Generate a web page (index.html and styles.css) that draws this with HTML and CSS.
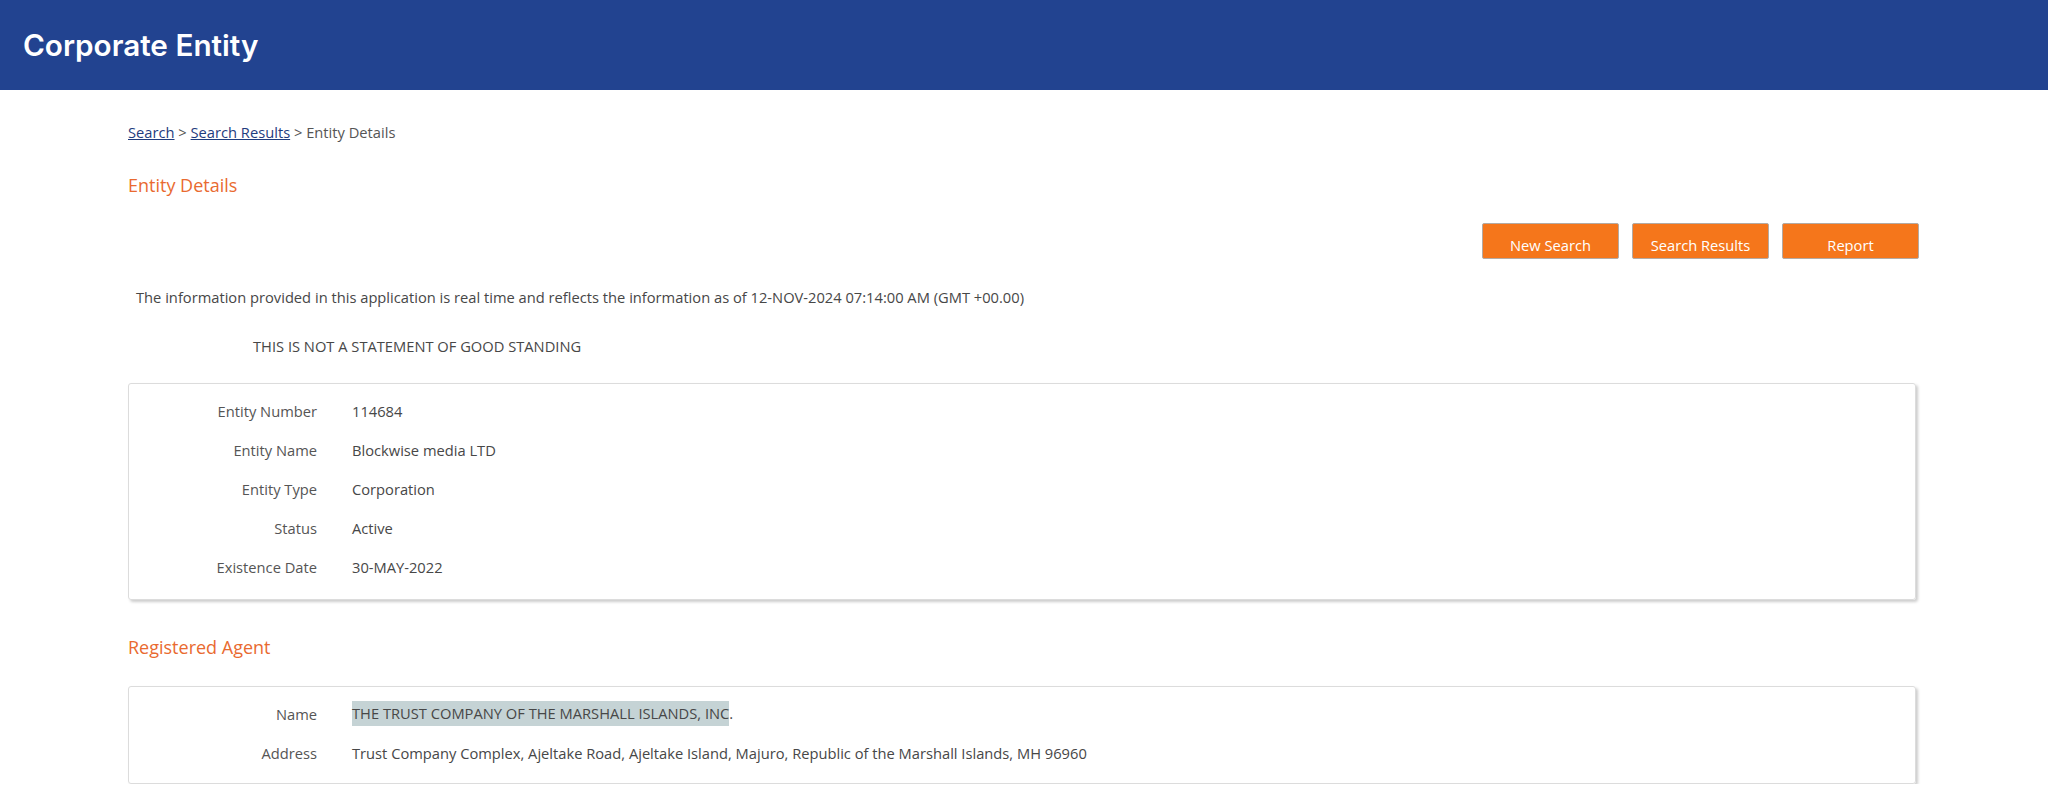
FILE: index.html
```html
<!DOCTYPE html>
<html lang="en">
<head>
	<meta charset="UTF-8">
	<link rel="stylesheet" href="styles.css">
	<title>Corporate Entity</title>
</head>
<body>

<div class="topbar">
	<h1>Corporate Entity</h1>
</div>

<div class="page">
	<div class="crumbs"><a href="#">Search</a> &gt; <a href="#">Search Results</a> &gt; Entity Details</div>

	<h2 class="section">Entity Details</h2>

	<div class="actions">
		<button class="btn">New Search</button>
		<button class="btn">Search Results</button>
		<button class="btn">Report</button>
	</div>

	<p class="info">The information provided in this application is real time and reflects the information as of 12-NOV-2024 07:14:00 AM (GMT +00.00)</p>

	<p class="notice">THIS IS NOT A STATEMENT OF GOOD STANDING</p>

	<div class="card">
		<div class="label">Entity Number</div><div class="value">114684</div>
		<div class="label">Entity Name</div><div class="value">Blockwise media LTD</div>
		<div class="label">Entity Type</div><div class="value">Corporation</div>
		<div class="label">Status</div><div class="value">Active</div>
		<div class="label">Existence Date</div><div class="value">30-MAY-2022</div>
	</div><!-- end of entity card -->

	<h2 class="section agent">Registered Agent</h2>

	<div class="card">
		<div class="label">Name</div><div class="value"><span class="hl">THE TRUST COMPANY OF THE MARSHALL ISLANDS, INC</span>.</div>
		<div class="label">Address</div><div class="value">Trust Company Complex, Ajeltake Road, Ajeltake Island, Majuro, Republic of the Marshall Islands, MH 96960</div>
	</div><!-- end of agent card -->
</div><!-- end of page -->

</body>
</html>
```

FILE: styles.css
```css
body {
	margin: 0;
	font-family: "Open Sans", "DejaVu Sans", sans-serif;
	font-size: 14.7px;
	color: #474747;
	background: #fff;
}

.topbar {
	height: 90px;
	background-color: #224390;
	display: flex;
	align-items: center;
	padding-left: 23px;
}
	.topbar h1 {
		margin: 0;
		color: #fff;
		font-family: Inter, "Liberation Sans", sans-serif;
		font-weight: 600;
		font-size: 29.7px;
	}

.page {
	padding: 32px 128px 0;
}

.crumbs {
	line-height: 20px;
	color: #555;
}
	.crumbs a {
		color: #1f3c7e;
	}

.section {
	margin: 31px 0 0;
	font-size: 18px;
	line-height: 24px;
	font-weight: 400;
	color: #e96a30;
}

.actions {
	display: flex;
	justify-content: flex-end;
	gap: 13px;
	margin-top: 26px;
	padding-right: 1px;
}

.btn {
	width: 137px;
	height: 36px;
	padding: 8px 0 0;
	background-color: #f5761b;
	border: 1px solid #b3aaa3;
	border-radius: 2px;
	color: #fff;
	font-family: "Open Sans", sans-serif;
	font-size: 14.7px;
	cursor: pointer;
}

.info {
	margin: 28px 0 0;
	padding-left: 8px;
	line-height: 20px;
}

.notice {
	margin: 29px 0 0;
	padding-left: 125px;
	line-height: 20px;
}

.card {
	margin-top: 27px;
	margin-right: 4px;
	padding: 7px 0 13px;
	border: 1px solid #dcdcdc;
	border-radius: 3px;
	box-shadow: 2px 2px 3px rgba(0, 0, 0, 0.2);
	display: grid;
	grid-template-columns: 188px 1fr;
	grid-auto-rows: 39px;
	column-gap: 35px;
	align-items: center;
}
	.card .label {
		text-align: right;
		color: #555;
	}

.section.agent {
	margin-top: 35px;
}

.agent + .card {
	padding-bottom: 11px;
}

.hl {
	display: inline-block;
	line-height: 25px;
	background-color: #c5d3d5;
}
```
